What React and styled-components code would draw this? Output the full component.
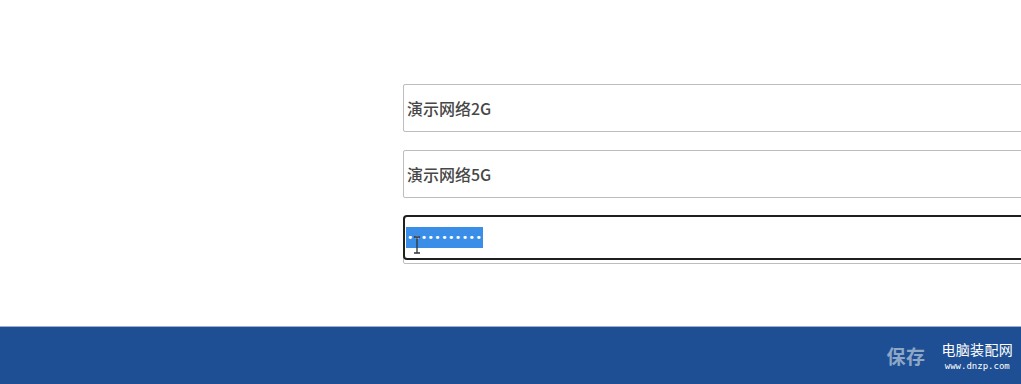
import React from 'react';
import styled, {createGlobalStyle} from 'styled-components';

const GlobalStyle = createGlobalStyle`
    html, body {
        margin:0;
        padding:0;
        background:#fff;
        overflow:hidden;
    }
    body {
        font-family:"Microsoft YaHei","Noto Sans CJK SC","Liberation Sans",sans-serif;
    }
`

const Page = styled.div`
    display:flex;
    flex-direction:column;
    width:1021px;
    height:384px;
    overflow:hidden;
`

const Form = styled.div`
    flex:1;
    display:flex;
    flex-direction:column;
    gap:18px;
    padding:84px 0 0 403px;
`

const Field = styled.div`
    display:flex;
    align-items:center;
    position:relative;
    box-sizing:border-box;
    width:660px;
    height:48px;
    border:1px solid #bdbdbd;
    border-radius:2px;
    padding-left:3px;
    font-size:16px;
    font-weight:500;
    color:#474747;
    background:#fff;
`

const FocusBox = styled.div`
    display:flex;
    align-items:center;
    position:absolute;
    left:-1px;
    top:-2px;
    right:-1px;
    height:45px;
    box-sizing:border-box;
    border:2px solid #1f1f1f;
    border-radius:4px;
    padding-left:1px;
    background:#fff;
`

const Selection = styled.span`
    display:inline-flex;
    align-items:center;
    height:21px;
    padding:0 1px 0 1px;
    background:#3a8ee8;
    color:#fff;
    font-family:"DejaVu Sans",sans-serif;
    font-size:11px;
    letter-spacing:0.35px;
`

const Caret = styled.svg`
    position:absolute;
    left:9px;
    top:19px;
`

const Footer = styled.div`
    display:flex;
    align-items:center;
    justify-content:flex-end;
    height:57px;
    background:#1e4f94;
    border-top:1px solid #9db2cc;
    padding-right:8px;
`

const Save = styled.span`
    font-size:19px;
    font-weight:700;
    color:#8ea7c7;
    margin-right:16px;
    letter-spacing:0.5px;
`

const Mark = styled.div`
    display:flex;
    flex-direction:column;
    align-items:center;
    color:#fff;
    margin-top:2px;
`

const MarkTitle = styled.span`
    font-size:14px;
    line-height:18px;
    letter-spacing:0.3px;
`

const MarkUrl = styled.span`
    font-family:"DejaVu Sans Mono","Liberation Mono",monospace;
    font-size:9px;
    line-height:16px;
`

const App = () => {
    return (
        <Page>
            <GlobalStyle/>
            <Form>
                <Field>演示网络2G</Field>
                <Field>演示网络5G</Field>
                <Field>
                    <FocusBox>
                        <Selection>•••••••••••</Selection>
                    </FocusBox>
                    <Caret width="8" height="18" viewBox="0 0 8 18">
                        <path d="M1 1h6M4 1v16M1 17h6" stroke="#333" strokeWidth="1.3" fill="none"/>
                    </Caret>
                </Field>
            </Form>
            <Footer>
                <Save>保存</Save>
                <Mark>
                    <MarkTitle>电脑装配网</MarkTitle>
                    <MarkUrl>www.dnzp.com</MarkUrl>
                </Mark>
            </Footer>
        </Page>
    )
}

export default App;
